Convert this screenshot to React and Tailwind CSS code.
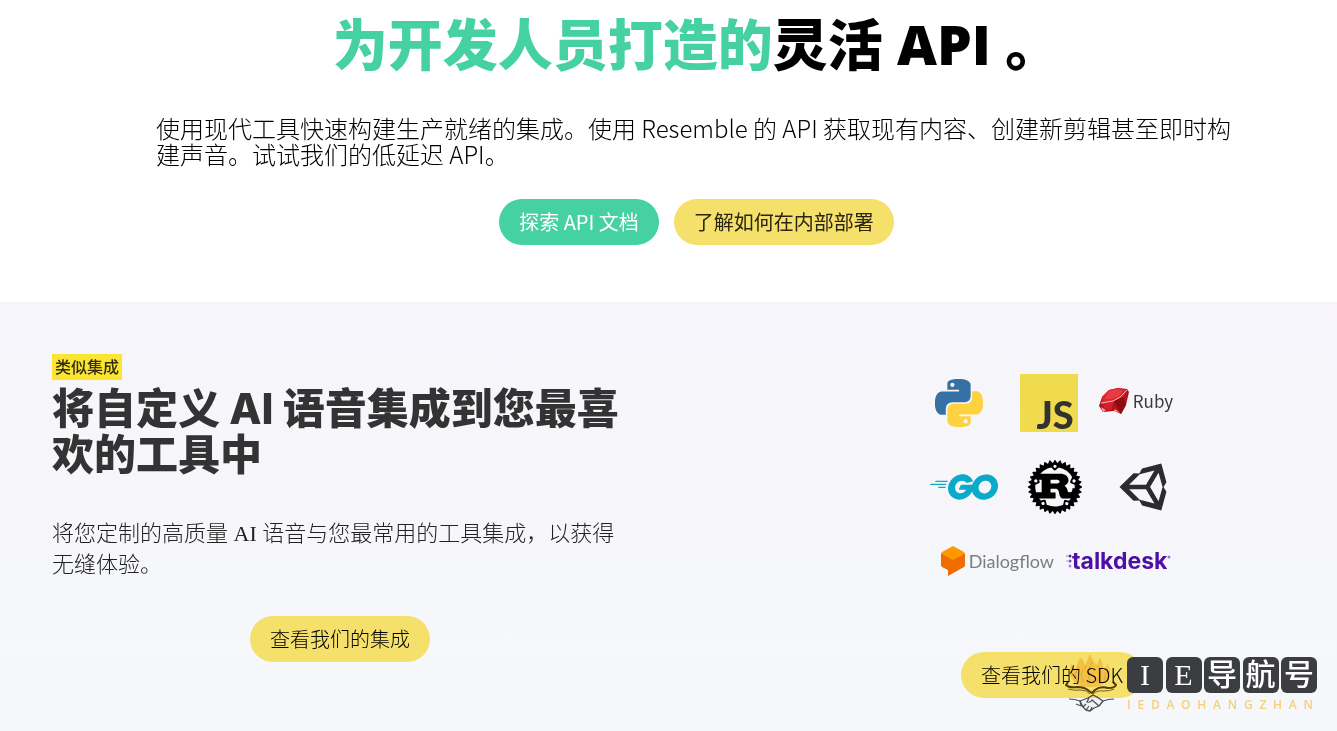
import React from 'react';
import { FaUnity } from 'react-icons/fa';
import { SiGo, SiRust } from 'react-icons/si';

const PILL = 'inline-flex items-center h-[46px] px-5 rounded-full text-xl';

function PythonLogo() {
  return (
    <svg viewBox="0 0 24 24" className="w-12 h-12" aria-label="Python">
      <path fill="#3571a3" d="M14.25.18l.9.2.73.26.59.3.45.32.34.34.25.34.16.33.1.3.04.26.02.2-.01.13V8.5l-.05.63-.13.55-.21.46-.26.38-.3.31-.33.25-.35.19-.35.14-.33.1-.3.07-.26.04-.21.02H8.77l-.69.05-.59.14-.5.22-.41.27-.33.32-.27.35-.2.36-.15.37-.1.35-.07.32-.04.27-.02.21v3.06H3.17l-.21-.03-.28-.07-.32-.12-.35-.18-.36-.26-.36-.36-.35-.46-.32-.59-.28-.73-.21-.88-.14-1.05-.05-1.23.06-1.22.16-1.04.24-.87.32-.71.36-.57.4-.44.42-.33.42-.24.4-.16.36-.1.32-.05.24-.01h.16l.06.01h8.16v-.83H6.18l-.01-2.75-.02-.37.05-.34.11-.31.17-.28.25-.26.31-.23.38-.2.44-.18.51-.15.58-.12.64-.1.71-.06.77-.04.84-.02 1.27.05zm-6.3 1.98l-.23.33-.08.41.08.41.23.34.33.22.41.09.41-.09.33-.22.23-.34.08-.41-.08-.41-.23-.33-.33-.22-.41-.09-.41.09z" />
      <path fill="#fed141" d="M21.04 6.11l.28.06.32.12.35.18.36.27.36.35.35.47.32.59.28.73.21.88.14 1.04.05 1.23-.06 1.23-.16 1.04-.24.86-.32.71-.36.57-.4.45-.42.33-.42.24-.4.16-.36.09-.32.05-.24.02-.16-.01h-8.22v.82h5.84l.01 2.76.02.36-.05.34-.11.31-.17.29-.25.25-.31.24-.38.2-.44.17-.51.15-.58.13-.64.09-.71.07-.77.04-.84.01-1.27-.04-1.07-.14-.9-.2-.73-.25-.59-.3-.45-.33-.34-.34-.25-.34-.16-.33-.1-.3-.04-.25-.02-.2.01-.13v-5.34l.05-.64.13-.54.21-.46.26-.38.3-.32.33-.24.35-.2.35-.14.33-.1.3-.06.26-.04.21-.02.13-.01h5.84l.69-.05.59-.14.5-.21.41-.28.33-.32.27-.35.2-.36.15-.36.1-.35.07-.32.04-.28.02-.21V6.07h2.09l.14.01zm-6.47 14.25l-.23.33-.08.41.08.41.23.33.33.23.41.08.41-.08.33-.23.23-.33.08-.41-.08-.41-.23-.33-.33-.23-.41-.08-.41.08z" />
    </svg>
  );
}

function RubyLogo() {
  return (
    <div className="flex items-center gap-1 mb-1">
      <svg viewBox="0 0 30 26" className="w-[30px] h-[26px]" aria-hidden="true">
        <path fill="#b3121a" d="M10 2 19 0 28 1 30 4 27 17 22 26 15 23 4 24 0 18 3 9Z" />
        <path fill="#e0232b" d="M10 2 19 0 28 2 24 9 15 13 3 15 3 9Z" />
        <path fill="#f2555a" d="M10 3 18 1 24 3 20 8 12 11 5 11Z" opacity=".5" />
        <path fill="#8e0d13" d="M15 13 24 9 27 17 22 26Z" />
        <path fill="#d3202a" d="M3 15 15 13 12 23 5 20Z" />
        <path fill="none" stroke="#fbe4e4" strokeWidth=".8" d="M2 15 14 13Q22 10 28 2" />
        <path fill="#f0a5a8" d="M2 19 7 22 4 24ZM16 21 21 25 15 23Z" />
      </svg>
      <span className="font-['Noto_Sans_CJK_SC'] text-[17px] leading-6 text-[#3a3a3f]">Ruby</span>
    </div>
  );
}

function DialogflowLogo() {
  return (
    <div className="flex items-center gap-1">
      <svg viewBox="0 0 24 30" className="w-6 h-[30px]" aria-hidden="true">
        <path fill="#ef6c00" d="M0 7 12 13 24 7V19Q24 20 23 21L7 30V24L1 21Q0 20 0 19Z" />
        <path fill="#ff9800" d="M11 .5Q12 0 13 .5L23 6Q24 7 23 8L12 14 1 8Q0 7 1 6Z" />
      </svg>
      <span className="font-[Lato] text-lg leading-6 text-[#7b7d80]">Dialogflow</span>
    </div>
  );
}

function TalkdeskLogo() {
  return (
    <div className="flex items-center">
      <svg viewBox="0 0 6 14" className="w-[6px] h-[14px]" aria-hidden="true">
        <g fill="#5a1fb0">
          <circle cx="4" cy="2" r="1.5" />
          <circle cx="4" cy="7" r="1.5" opacity=".8" />
          <circle cx="4" cy="12" r="1.5" opacity=".5" />
          <circle cx="1" cy="2" r="1" opacity=".4" />
          <circle cx="1" cy="7" r="1" opacity=".3" />
        </g>
      </svg>
      <span className="font-[Inter] font-bold text-[23px] leading-6 text-[#4f0fa5]">talkdesk</span>
      <svg viewBox="0 0 4 14" className="w-1 h-[14px]" aria-hidden="true">
        <circle cx="2" cy="3" r="1.5" fill="#9a7cc8" />
      </svg>
    </div>
  );
}

function Watermark() {
  return (
    <div className="absolute right-5 bottom-[18px] flex items-start pointer-events-none" aria-hidden="true">
      <svg viewBox="0 0 56 60" className="w-14 h-[60px] mix-blend-multiply">
        <path
          fill="#fdcf80"
          opacity=".7"
          d="M14 31C5 24 6 16 9 10 10 15 12 16 13 17 13 10 17 8 17 4 21 7 21 10 22 12 25 8 24 4 28 1 27 6 32 8 33 12 36 10 35 7 37 5 40 10 40 13 40 17 43 15 44 13 44 10 49 18 48 26 40 31 36 35 19 35 14 31Z"
        />
        <path fill="none" stroke="#f7a94a" strokeWidth="1" opacity=".7" d="M14 27Q10 21 16 14M21 29Q15 21 23 13M28 30Q22 20 29 9M34 29Q38 22 35 14M41 27Q44 22 41 20" />
        <path fill="none" stroke="#5a4313" strokeWidth="2" strokeLinejoin="round" d="M5 29 3 32Q6 35 14 34 22 34 26 38L29 40 32 37Q37 33 45 35 52 35 53 32L50 29" />
        <path fill="none" stroke="#8a6a20" strokeWidth="1" d="M5 36Q12 38 18 37 24 37 27 41M30 41Q34 37 41 38 47 38 51 36" />
        <path
          fill="#f7f9fb"
          stroke="#4c4f50"
          strokeWidth="1.3"
          strokeLinejoin="round"
          d="M17 48 25 45 30 42 34 44 40 48 36 53 31 55 27 58 23 57 18 52Z"
        />
        <path fill="none" stroke="#4c4f50" strokeWidth="1.2" d="M6 46Q12 46 17 48L20 54M40 48Q45 46 51 46M26 45 24 49Q27 50 29 47L36 53M20 54 23 51M23 57 26 53M27 58 29 54M13 51 18 53" />
      </svg>
      <div className="w-[190px] mt-1 ml-2">
        <div className="flex justify-between">
          {['I', 'E', '导', '航', '号'].map((char) => (
            <span
              key={char}
              className="flex items-center justify-center w-9 h-9 rounded-md bg-[#3c3d40] text-white text-[30px] leading-9 font-medium font-['Liberation_Serif','Noto_Sans_CJK_SC',serif]"
            >
              {char}
            </span>
          ))}
        </div>
        <div className="flex justify-between mt-1 pr-1 font-['Open_Sans'] font-semibold text-xs text-[#f6cf7c]">
          {'IEDAOHANGZHAN'.split('').map((char, i) => (
            <span key={i}>{char}</span>
          ))}
        </div>
      </div>
    </div>
  );
}

export default function App() {
  return (
    <div className="relative min-h-screen flex flex-col bg-white font-['Open_Sans','Noto_Sans_CJK_SC',sans-serif]">
      <section className="pl-[156px] pr-[100px] pt-[14px] pb-[57px] flex flex-col items-center">
        <h1 className="text-[55px] leading-[60px] font-extrabold text-black whitespace-nowrap">
          <span className="text-[#45d1a2]">为开发人员打造的</span>灵活 API 。
        </h1>
        <p className="mt-[41px] w-full text-2xl leading-[26px] font-light text-black font-['Noto_Sans_CJK_SC',sans-serif]">
          使用现代工具快速构建生产就绪的集成。使用 Resemble 的 API 获取现有内容、创建新剪辑甚至即时构建声音。试试我们的低延迟 API。
        </p>
        <div className="mt-8 flex gap-[15px] font-['Noto_Sans_CJK_SC',sans-serif]">
          <a href="#docs" className={`${PILL} bg-[#45d1a2] text-white`}>探索 API 文档</a>
          <a href="#deploy" className={`${PILL} bg-[#f4e06a] text-[#2c2510]`}>了解如何在内部部署</a>
        </div>
      </section>

      <section className="grow flex justify-between px-[52px] pt-[52px] bg-linear-to-b from-[#f7f5fb] to-[#f5f8fa]">
        <div className="w-full max-w-xl flex flex-col items-start">
          <span className="px-[3px] bg-[#f9e532] text-base leading-[26px] font-medium text-[#332c10]">类似集成</span>
          <h2 className="mt-[6px] text-[42px] leading-[46px] font-extrabold text-[#333] font-['Inter','Noto_Sans_CJK_SC',sans-serif]">
            将自定义 AI 语音集成到您最喜欢的工具中
          </h2>
          <p className="mt-10 text-[22px] leading-[31px] font-light text-[#222] font-['Liberation_Serif','Noto_Sans_CJK_SC',sans-serif]">
            将您定制的高质量 AI 语音与您最常用的工具集成，以获得无缝体验。
          </p>
          <a href="#integrations" className={`${PILL} mt-9 self-center bg-[#f4e06a] text-black font-light font-['Noto_Sans_CJK_SC',sans-serif]`}>
            查看我们的集成
          </a>
        </div>

        <div className="w-[466px] pt-5 flex flex-col items-center">
          <div className="pl-1 flex items-center gap-[21px]">
            <div className="mr-4"><PythonLogo /></div>
            <div className="w-[58px] h-[58px] bg-[#f0db4f] flex items-end justify-end px-1 font-[Lato] font-black text-[38px] leading-9 text-[#323330]">JS</div>
            <RubyLogo />
          </div>
          <div className="mt-[21px] flex items-center">
            <SiGo className="w-[68px] h-[68px] text-[#0aaacb]" />
            <SiRust className="ml-[30px] w-[54px] h-[54px] text-black" />
            <FaUnity className="ml-9 w-14 h-14 text-[#2b2c30]" />
          </div>
          <div className="mt-[25px] pl-2 flex items-center gap-3">
            <DialogflowLogo />
            <TalkdeskLogo />
          </div>
          <a href="#sdk" className={`${PILL} mt-[76px] bg-[#f4e06a] text-black font-light font-['Noto_Sans_CJK_SC',sans-serif]`}>
            查看我们的 SDK
          </a>
        </div>
      </section>
      <Watermark />
    </div>
  );
}
